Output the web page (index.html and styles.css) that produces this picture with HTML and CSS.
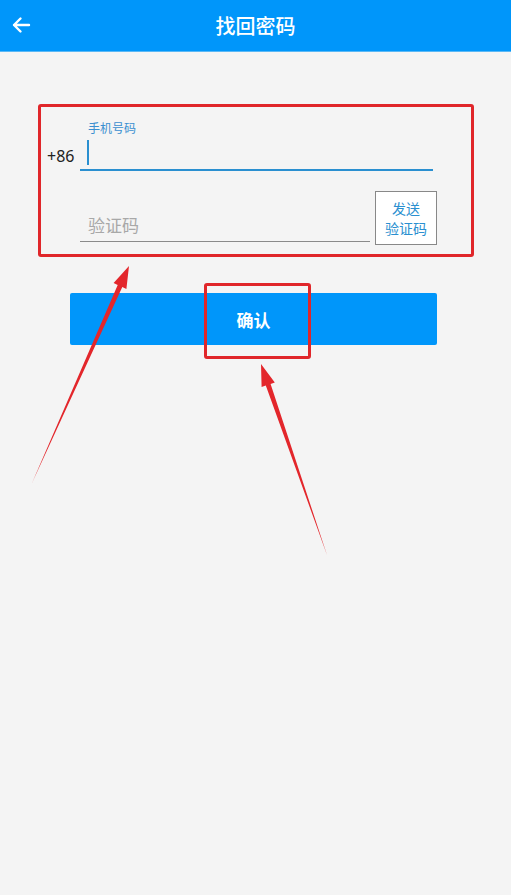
FILE: index.html
```html
<!DOCTYPE html>
<html lang="zh-CN">
<head>
    <meta charset="UTF-8">
    <meta name="viewport" content="width=device-width, initial-scale=1.0">
    <title>找回密码</title>
    <link rel="stylesheet" href="styles.css">
</head>
<body>
    <!-- Header -->
    <div class="header">
        <svg class="back" width="20" height="20" viewBox="0 0 20 20">
            <path d="M18 10H3M9.5 3.5L3 10l6.5 6.5" fill="none" stroke="#fff" stroke-width="2.4" stroke-linecap="round" stroke-linejoin="round"/>
        </svg>
        <div class="title">找回密码</div>
    </div>

    <!-- Form -->
    <div class="content">
        <div class="phone-row">
            <div class="prefix">+86</div>
            <div class="phone-field">
                <div class="field-label">手机号码</div>
                <div class="field-input"><span class="cursor"></span></div>
            </div>
        </div>

        <div class="code-row">
            <div class="code-field">验证码</div>
            <button class="send-btn">发送<br>验证码</button>
        </div>

        <button class="confirm">确认</button>
    </div>

    <!-- Annotations -->
    <div class="mark mark-form"></div>
    <div class="mark mark-confirm"></div>
    <svg class="arrows" width="511" height="895" viewBox="0 0 511 895">
        <polygon points="32,483 122.3,287 126.4,288.9 129,266 113.6,283.1 117.7,285" fill="#e3262b"/>
        <polygon points="327,555 270.6,384 274.8,382.5 261,364 261.6,387.1 265.8,385.6" fill="#e3262b"/>
    </svg>
</body>
</html>
```

FILE: styles.css
```css
/* --- GENERAL --- */
body {
    margin: 0;
    background-color: #f4f4f4;
    font-family: "Noto Sans CJK SC", "Noto Sans", sans-serif;
    position: relative;
    min-height: 895px;
    overflow: hidden;
}

/* --- HEADER --- */
.header {
    height: 51px;
    background: #0096fa;
    border-bottom: 1px solid #5ab8f5;
    display: flex;
    align-items: center;
    justify-content: center;
    position: relative;
}

.back {
    position: absolute;
    left: 11px;
    top: 15px;
}

.title {
    color: #fff;
    font-size: 20px;
    font-weight: 500;
}

/* --- FORM --- */
.content {
    padding-top: 68px;
}

.phone-row {
    display: flex;
    align-items: flex-end;
    margin-left: 47px;
    width: 386px;
}

.prefix {
    width: 33px;
    font-size: 16px;
    color: #222;
    line-height: 20px;
    padding-bottom: 5px;
    font-family: "Noto Sans", sans-serif;
}

.phone-field {
    flex: 1;
}

.field-label {
    font-size: 12px;
    line-height: 16px;
    color: #3a8fd0;
    margin-left: 8px;
}

.field-input {
    height: 33px;
    border-bottom: 2px solid #2a8fd0;
    position: relative;
}

.cursor {
    position: absolute;
    left: 7px;
    top: 4px;
    width: 2px;
    height: 25px;
    background: #2a8fd0;
}

.code-row {
    display: flex;
    align-items: flex-start;
    gap: 5px;
    margin: 20px 0 0 80px;
    width: 357px;
}

.code-field {
    flex: 1;
    height: 28px;
    padding: 22px 0 0 8px;
    font-size: 17px;
    line-height: 24px;
    color: #a8a8a8;
    border-bottom: 1px solid #8a8a8a;
}

.send-btn {
    width: 62px;
    height: 54px;
    padding: 0;
    background: #fff;
    border: 1px solid #888;
    color: #2a8fd0;
    font-family: inherit;
    font-size: 14px;
    line-height: 20px;
}

.confirm {
    display: block;
    margin: 48px 0 0 70px;
    width: 367px;
    height: 52px;
    padding: 0;
    border: none;
    border-radius: 2px;
    background: #0096fa;
    color: #fff;
    font-family: inherit;
    font-size: 17px;
    font-weight: bold;
}

/* --- ANNOTATIONS --- */
.mark {
    position: absolute;
    box-sizing: border-box;
    border: 3px solid #e0262a;
    border-radius: 3px;
}

.mark-form {
    left: 38px;
    top: 104px;
    width: 436px;
    height: 153px;
}

.mark-confirm {
    left: 204px;
    top: 283px;
    width: 107px;
    height: 76px;
}

.arrows {
    position: absolute;
    left: 0;
    top: 0;
    pointer-events: none;
}
```
